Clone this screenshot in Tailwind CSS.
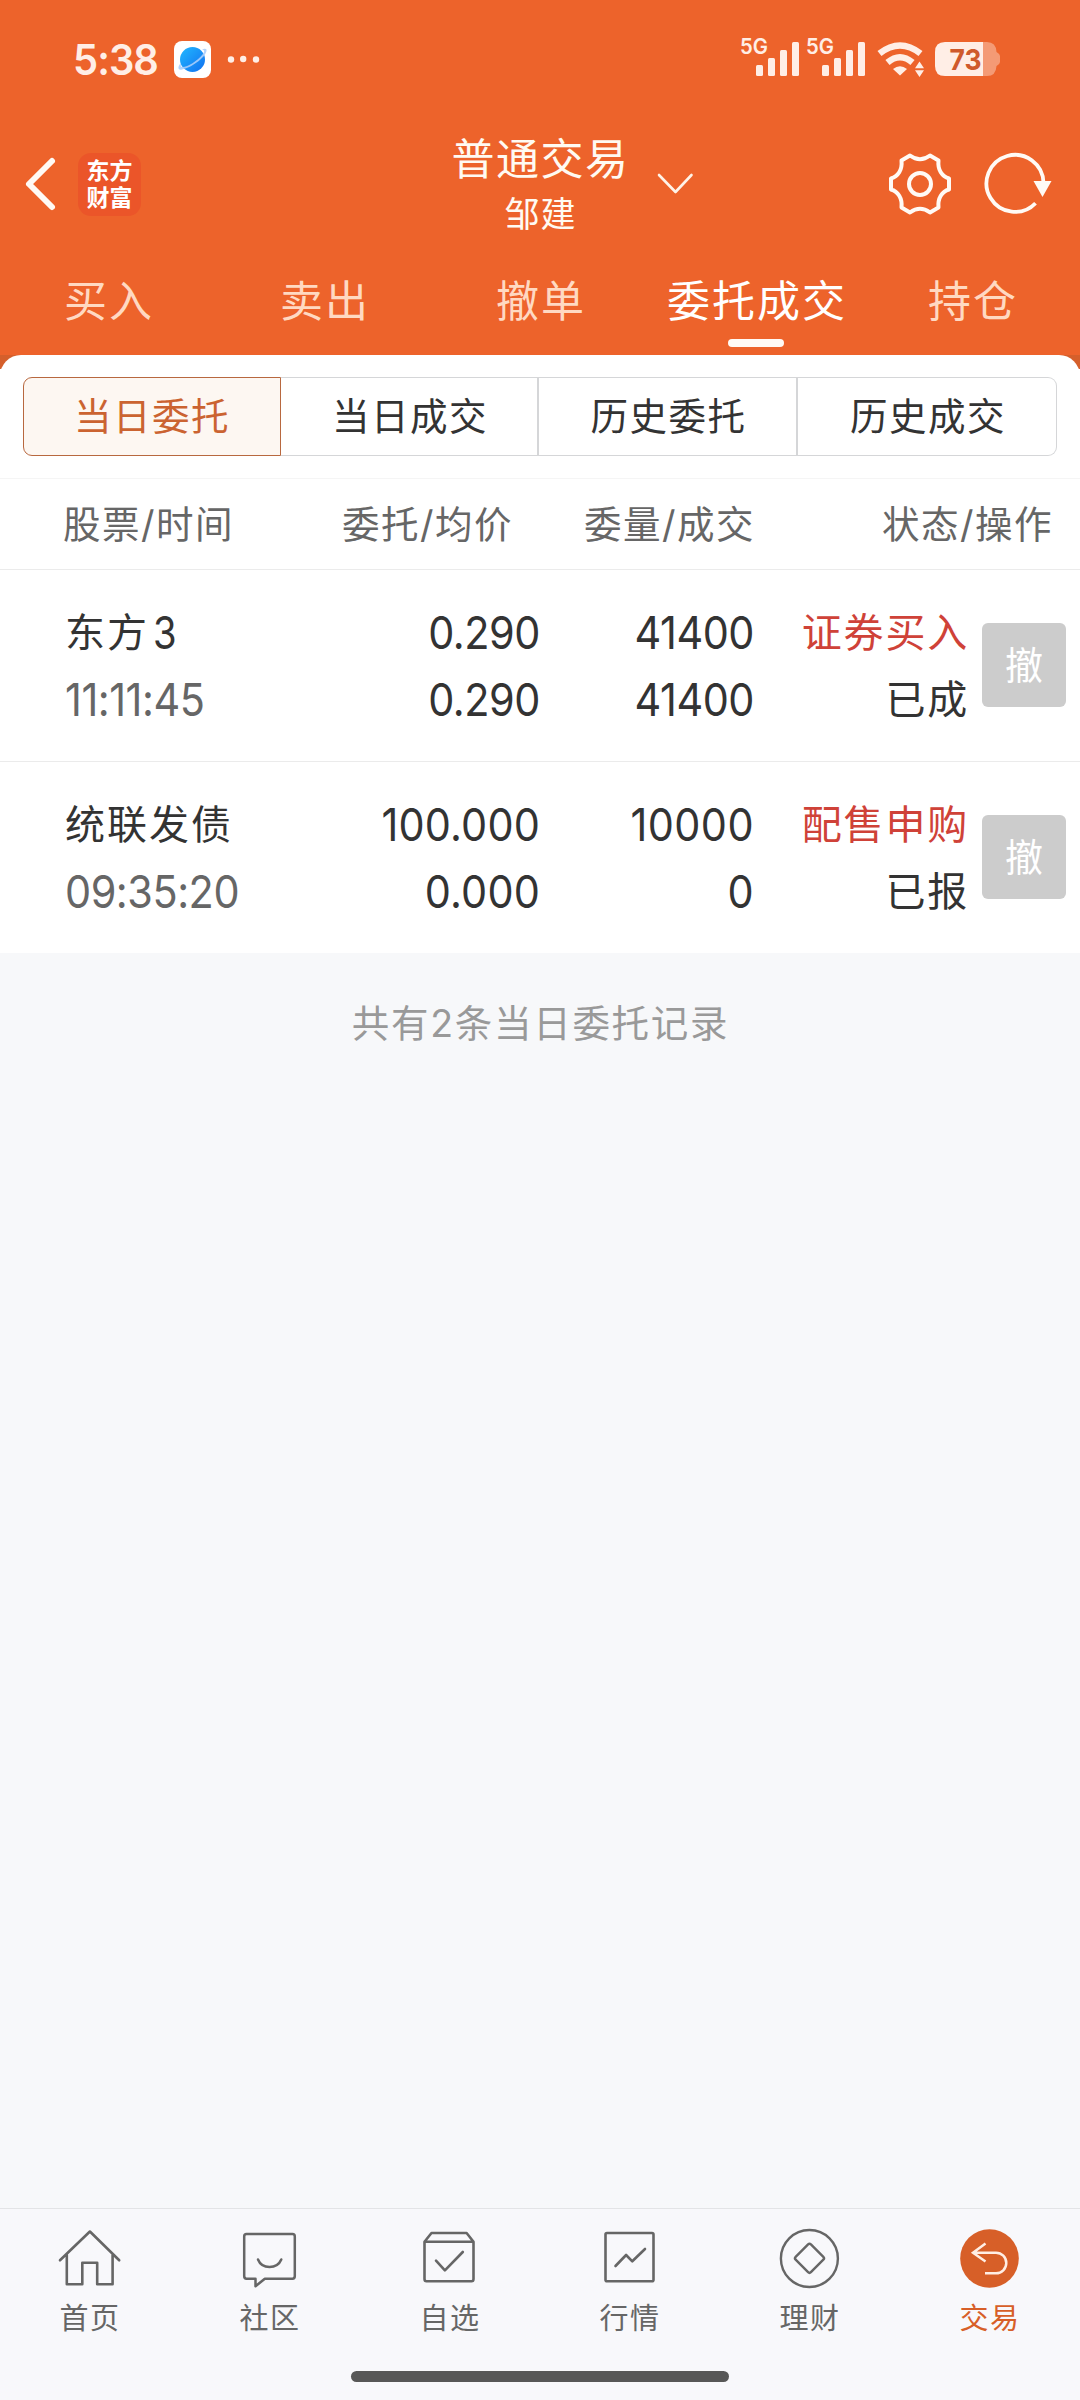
<!DOCTYPE html>
<html lang="zh-CN">
<head>
    <meta charset="UTF-8">
    <meta name="viewport" content="width=device-width, initial-scale=1.0">
    <title>普通交易</title>
    <script src="https://cdn.jsdelivr.net/npm/@tailwindcss/browser@4"></script>
</head>
<body class="bg-[#f7f8fa] font-[Inter,'Noto_Sans_CJK_SC',sans-serif] text-[#333333]">
<div class="w-[1080px] h-[2400px] flex flex-col overflow-hidden">
    <!-- Header -->
    <header class="h-[355px] bg-[#ed632b] text-white flex flex-col shrink-0">
        <!-- Status bar -->
        <div class="h-[118px] flex items-center justify-between pl-[73px] pr-[78px] text-[#ffeee6]">
            <div class="flex items-center">
                <span class="w-[101px] pt-[2px] text-[42px] leading-none font-semibold tracking-[-1px] scale-x-95 origin-left">5:38</span>
                <svg class="w-[37px] h-[37px]" viewBox="0 0 37 37">
                    <defs>
                        <linearGradient id="planet" x1="0" y1="0" x2="1" y2="1">
                            <stop offset="0" stop-color="#22b8ff"/>
                            <stop offset="1" stop-color="#1070f0"/>
                        </linearGradient>
                    </defs>
                    <rect width="37" height="37" rx="8" fill="#fff"/>
                    <circle cx="18.500" cy="18.500" r="12.500" fill="url(#planet)"/>
                    <path d="M7 22 C3 26 4 29.500 8 28.500 C17 27 31 17 32.500 10 C33 7.500 31 7 28 8.500 C31 9 30.500 11 28.500 13.500 C23 20 14 26 8.500 26 C6.500 26 6.500 24.500 7 22Z" fill="#a9cdfb" fill-opacity="0.9"/>
                </svg>
                <svg class="w-[34px] h-[8px] ml-[16px]" viewBox="0 0 34 8" fill="currentColor">
                    <circle cx="4" cy="4.500" r="3.200"/>
                    <circle cx="16.200" cy="4" r="3.200"/>
                    <circle cx="29" cy="4.500" r="3.200"/>
                </svg>
            </div>
            <svg class="w-[272px] h-[60px]" viewBox="730 29 272 60" fill="currentColor">
                <text x="740" y="53.500" font-size="22" font-weight="600" textLength="28" lengthAdjust="spacingAndGlyphs">5G</text>
                <rect x="756" y="65" width="7" height="11" rx="1.500"/>
                <rect x="768" y="58" width="7" height="18" rx="1.500"/>
                <rect x="780" y="50" width="7" height="26" rx="1.500"/>
                <rect x="792" y="42" width="7" height="34" rx="1.500"/>
                <text x="806" y="53.500" font-size="22" font-weight="600" textLength="28" lengthAdjust="spacingAndGlyphs">5G</text>
                <rect x="822" y="65" width="7" height="11" rx="1.500"/>
                <rect x="834" y="58" width="7" height="18" rx="1.500"/>
                <rect x="846" y="50" width="7" height="26" rx="1.500"/>
                <rect x="858" y="42" width="7" height="34" rx="1.500"/>
                <path d="M879.500 53.500 Q900 37.500 920.500 53.500" fill="none" stroke="currentColor" stroke-width="6.500"/>
                <path d="M887.500 62.500 Q900 52 912.500 62.500" fill="none" stroke="currentColor" stroke-width="6.500"/>
                <path d="M893 69 Q900 63.500 907 69 L900 75.500Z"/>
                <path d="M915 68.200 L919.500 61.500 L924 68.200Z M915 70.200 L924 70.200 L919.500 77Z"/>
                <path d="M983 42 H987 Q996 42 996.500 52 Q1000 54 1000 56 V62 Q1000 64 996.500 66 Q996 76 987 76 H983Z" fill-opacity="0.400"/>
                <path d="M945 42 H983 V76 H945 Q935 76 935 66 V52 Q935 42 945 42Z"/>
                <text x="949.500" y="69.500" font-size="29" font-weight="700" textLength="32" lengthAdjust="spacingAndGlyphs" fill="#cf5a2c">73</text>
            </svg>
        </div>
        <!-- Title bar -->
        <div class="h-[132px] grid grid-cols-[1fr_auto_1fr] items-center">
            <div class="flex items-center pl-[24px]">
                <svg class="w-[34px] h-[56px]" viewBox="0 0 34 56" fill="none" stroke="#fffaf5" stroke-width="6" stroke-linecap="round" stroke-linejoin="round">
                    <path d="M28 5 L5 28 L28 51"/>
                </svg>
                <div class="ml-[20px] mt-[1px] w-[63px] h-[63px] rounded-[13px] bg-[#eb5529] flex flex-col items-center justify-center text-[23px] leading-[27px] font-bold">
                    <span>东方</span>
                    <span>财富</span>
                </div>
            </div>
            <div class="flex flex-col items-center pt-[3px] text-[#fffaf2]">
                <span class="text-[43px] leading-[56px] tracking-[1.500px] -mr-[1px]">普通交易</span>
                <span class="text-[35px] leading-[54px] tracking-[1px] -mr-[1px]">邹建</span>
            </div>
            <div class="flex items-center pl-[28px]">
                <svg class="w-[38px] h-[24px]" viewBox="0 0 38 24" fill="none" stroke="#fff3e8" stroke-width="2.600" stroke-linecap="round" stroke-linejoin="round">
                    <path d="M2 3 L18.500 20 L34.500 3"/>
                </svg>
                <svg class="w-[66px] h-[66px] ml-auto" viewBox="-33 -33 66 66" fill="none" stroke="#fffaf5" stroke-width="4" stroke-linejoin="round">
                    <path d="M-10 -28.500 Q0 -21 10 -28.500 L18.500 -23.500 C17.500 -14 22 -7.500 29 -5.500 V5.500 C22 7.500 17.500 14 18.500 23.500 L10 28.500 Q0 21 -10 28.500 L-18.500 23.500 C-17.500 14 -22 7.500 -29 5.500 V-5.500 C-22 -7.500 -17.500 -14 -18.500 -23.500Z"/>
                    <circle r="11"/>
                </svg>
                <svg class="w-[72px] h-[66px] ml-[29px] mr-[26px]" viewBox="-33 -33 72 66" fill="none" stroke="#fffaf5" stroke-width="3.800">
                    <path d="M28.500 -1 A28.500 28.500 0 1 0 20.500 19.200"/>
                    <path d="M18.500 -3 H36.500 L27.500 13Z" fill="#fffaf5" stroke="none"/>
                </svg>
            </div>
        </div>
        <!-- Tabs -->
        <nav class="h-[105px] grid grid-cols-5 text-center text-[43px] leading-[102px] tracking-[2px] text-[#ffd9c2]">
            <a class="pl-[2px]">买入</a>
            <a class="pl-[2px]">卖出</a>
            <a class="pl-[2px]">撤单</a>
            <a class="pl-[2px] relative text-white">委托成交
                <span class="absolute left-[80px] top-[89px] w-[56px] h-[8px] rounded-full bg-[#fffaf5]"></span>
            </a>
            <a class="pl-[2px]">持仓</a>
        </nav>
    </header>

    <main class="flex-1">
        <div class="h-[14px] bg-[#d55f2b] overflow-hidden">
            <div class="h-[40px] rounded-t-[21px] bg-white"></div>
        </div>
        <!-- Segments -->
        <div class="h-[110px] bg-white pt-[8px] px-[23px] border-b border-[#f5f5f5]">
            <div class="h-[79px] grid grid-cols-[258px_258px_259px_259px] text-center text-[37.500px] leading-[77px] tracking-[1.500px]">
                <div class="border border-[#b8683f] rounded-l-[9px] bg-[#fdf7f2] text-[#cb6331]">当日委托</div>
                <div class="pl-[2px] border-y border-r-2 border-[#d5d6d8]">当日成交</div>
                <div class="pl-[2px] border-y border-r-2 border-[#d5d6d8]">历史委托</div>
                <div class="pl-[2px] border-y border-r border-[#d5d6d8] rounded-r-[9px]">历史成交</div>
            </div>
        </div>
        <!-- Column titles -->
        <div class="h-[91px] bg-white border-b border-[#ebebeb] grid grid-cols-[234px_279px_242px_298px] text-right text-[37.500px] leading-[91px] tracking-[1.500px] text-[#666666]">
            <div>股票/时间</div>
            <div>委托/均价</div>
            <div>委量/成交</div>
            <div>状态/操作</div>
        </div>
        <!-- Orders -->
        <div class="h-[192px] bg-white border-b border-[#ebebeb] grid grid-cols-[240px_235px_214px_215px_84px] pl-[65px] pt-[29px] text-[45px] leading-[67px] tracking-[-0.500px] text-right">
            <div class="text-left">
                <p class="flex h-[67px]"><span class="text-[40px] tracking-[2px]">东方</span><span class="ml-[4px] scale-x-85 origin-left">3</span></p>
                <p class="text-[#666666] scale-x-92 origin-left">11:11:45</p>
            </div>
            <div class="scale-x-92 origin-right"><p>0.290</p><p>0.290</p></div>
            <div class="scale-x-92 origin-right"><p>41400</p><p>41400</p></div>
            <div class="text-[40px] tracking-[1.800px]"><p class="text-[#cf4238]">证券买入</p><p>已成</p></div>
            <button class="ml-[13px] mt-[24px] w-[84px] h-[84px] rounded-[6px] bg-[#cccccc] text-white text-[38px] leading-none tracking-normal">撤</button>
        </div>
        <div class="h-[191px] bg-white grid grid-cols-[240px_235px_214px_215px_84px] pl-[65px] pt-[29px] text-[45px] leading-[67px] tracking-[-0.500px] text-right">
            <div class="text-left">
                <p class="text-[40px] tracking-[2px]">统联发债</p>
                <p class="text-[#666666] scale-x-92 origin-left">09:35:20</p>
            </div>
            <div class="scale-x-92 origin-right tracking-[0.200px]"><p>100.000</p><p>0.000</p></div>
            <div class="scale-x-92 origin-right tracking-[0.500px]"><p>10000</p><p>0</p></div>
            <div class="text-[40px] tracking-[1.800px]"><p class="text-[#cf4238]">配售申购</p><p>已报</p></div>
            <button class="ml-[13px] mt-[24px] w-[84px] h-[84px] rounded-[6px] bg-[#cccccc] text-white text-[38px] leading-none tracking-normal">撤</button>
        </div>
        <p class="pt-[36px] pl-[1px] text-center text-[37.500px] leading-[70px] tracking-[1.700px] text-[#999999]">共有2条当日委托记录</p>
    </main>

    <!-- Bottom nav -->
    <footer class="h-[192px] shrink-0 bg-[#f8f8fb] border-t border-[#e3e4e6] flex flex-col items-center">
        <nav class="w-full pt-[15px] h-[162px] grid grid-cols-6 text-[29px] leading-[49px] tracking-[1.500px] text-[#666666]">
            <a class="flex flex-col items-center">
                <svg class="w-[80px] h-[70px]" viewBox="0 0 80 70" fill="none" stroke="currentColor" stroke-width="2.600" stroke-linecap="round" stroke-linejoin="round">
                    <path d="M10 36.300 L39.900 7.500 L69.200 36.300 M16.800 31 V60.300 H32.300 V38.700 H47.200 V60.300 H62.600 V31"/>
                </svg>
                <span>首页</span>
            </a>
            <a class="flex flex-col items-center">
                <svg class="w-[80px] h-[70px]" viewBox="0 0 80 70" fill="none" stroke="currentColor" stroke-width="2.500" stroke-linecap="round" stroke-linejoin="round">
                    <path d="M16.500 10 H62.500 Q64.800 10 64.800 12.500 V52 Q64.800 54.700 62.500 54.700 H34.800 L25.500 62.300 V54.700 H16.500 Q14.200 54.700 14.200 52 V12.500 Q14.200 10 16.500 10Z"/>
                    <path d="M28 35.500 C32 45.500 47 45.500 51.300 35.500"/>
                </svg>
                <span>社区</span>
            </a>
            <a class="flex flex-col items-center">
                <svg class="w-[80px] h-[70px]" viewBox="0 0 80 70" fill="none" stroke="currentColor" stroke-width="2.600" stroke-linecap="round" stroke-linejoin="round">
                    <path d="M14.500 17.700 H63.500 V55 Q63.500 57.300 61.500 57.300 H16.500 Q14.500 57.300 14.500 55 V17.700 L21.500 9 H56.600 L63.500 17.700"/>
                    <path d="M26 36.700 L34.900 46.300 L52.800 28"/>
                </svg>
                <span>自选</span>
            </a>
            <a class="flex flex-col items-center">
                <svg class="w-[80px] h-[70px]" viewBox="0 0 80 70" fill="none" stroke="currentColor" stroke-width="2.600" stroke-linecap="round" stroke-linejoin="round">
                    <rect x="15.500" y="9" width="48" height="48.300" rx="1.500"/>
                    <path d="M25.500 42 L36.100 31 L42.300 37.300 L55 25"/>
                </svg>
                <span>行情</span>
            </a>
            <a class="flex flex-col items-center">
                <svg class="w-[80px] h-[70px]" viewBox="0 0 80 70" fill="none" stroke="currentColor" stroke-width="2.400">
                    <circle cx="39.400" cy="34.500" r="28.500"/>
                    <rect x="28.700" y="23.500" width="21.600" height="21.600" rx="2" transform="rotate(45 39.500 34.300)"/>
                </svg>
                <span>理财</span>
            </a>
            <a class="flex flex-col items-center text-[#d75f28]">
                <svg class="w-[80px] h-[70px]" viewBox="0 0 80 70">
                    <circle cx="39.500" cy="34.500" r="29.300" fill="currentColor"/>
                    <path d="M35.500 19.500 L23 28.700 L35.500 37.500 M24 28.700 H46 A10.300 10.300 0 0 1 46 49.300 H35" fill="none" stroke="#ffeee4" stroke-width="2.500"/>
                </svg>
                <span>交易</span>
            </a>
        </nav>
        <div class="w-[378px] h-[11px] rounded-full bg-[#575757]"></div>
    </footer>
</div>
</body>
</html>
